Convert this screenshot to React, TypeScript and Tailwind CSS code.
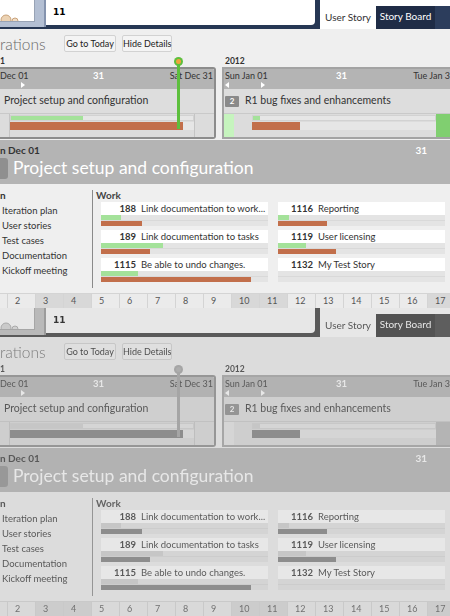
import React from "react";

interface WorkItem {
  id: string;
  title: string;
  done: number;
  spent: number;
}

const workColumns: WorkItem[][] = [
  [
    { id: "188", title: "Link documentation to work...", done: 20, spent: 41 },
    { id: "189", title: "Link documentation to tasks", done: 62, spent: 49 },
    { id: "1115", title: "Be able to undo changes.", done: 37, spent: 150 },
  ],
  [
    { id: "1116", title: "Reporting", done: 11, spent: 49 },
    { id: "1119", title: "User licensing", done: 28, spent: 58 },
    { id: "1132", title: "My Test Story", done: 0, spent: 0 },
  ],
];

const planItems = ["Iteration plan", "User stories", "Test cases", "Documentation", "Kickoff meeting"];

// day 1 is scrolled off to the left, only its last 8px show
const days = Array.from({ length: 16 }, (_, i) => i + 2);
const weekend = [3, 4, 10, 11, 17];

function Arrow({ dir }: { dir: "left" | "right" }) {
  return (
    <svg width="4" height="6" viewBox="0 0 4 6" className="block">
      {dir === "right" ? <path d="M0 0 L4 3 L0 6 Z" fill="#fff" /> : <path d="M4 0 L0 3 L4 6 Z" fill="#fff" />}
    </svg>
  );
}

function TopBar() {
  return (
    <div className="flex h-[29px] bg-[#263754]">
      <div className="h-[27px] w-[46px] border-r-2 border-[#8493ae] bg-[#b3bfd3]">
        <div className="h-[22px] w-[35px] overflow-hidden border-r border-b border-[#98a3b5] bg-white">
          <svg width="35" height="22" viewBox="0 0 35 22" className="block">
            <circle cx="6" cy="20" r="5" fill="#ecd3b4" stroke="#c9a27a" strokeWidth="1" />
            <circle cx="15" cy="21" r="3" fill="#f0dcc4" stroke="#c9a27a" strokeWidth="1" />
          </svg>
        </div>
      </div>
      <div className="flex h-[25px] w-[269px] items-center rounded-br-[4px] bg-white pl-[7px] font-['DejaVu_Sans',sans-serif] text-[9px] font-bold text-black">
        11
      </div>
      <div className="w-[5px]" />
      <div className="flex flex-1 flex-col">
        <div className="h-[6px] bg-white" />
        <div className="flex h-[23px]">
          <div className="flex w-[56px] items-center justify-center bg-white pb-[1px] text-[10px] text-[#333]">User Story</div>
          <div className="flex w-[59px] items-center justify-center bg-[#1f2c46] pb-[3px] text-[10px] text-white">Story Board</div>
          <div className="flex-1 bg-[#2c3d5c]" />
        </div>
      </div>
    </div>
  );
}

function Toolbar() {
  return (
    <div className="flex h-[27px] items-start pt-[6px]">
      <div className="w-[64px] pt-[1px] text-[15.5px] font-light leading-[16px] text-[#6a6a6a]">rations</div>
      <button className="h-[17px] w-[52px] whitespace-nowrap rounded-[2px] border border-[#d2d2d2] bg-[#f4f4f4] text-[9px] leading-[15px] text-[#222]">
        Go to Today
      </button>
      <button className="ml-[6px] h-[17px] w-[50px] whitespace-nowrap rounded-[2px] border border-[#d2d2d2] bg-[#f4f4f4] text-[9px] leading-[15px] text-[#222]">
        Hide Details
      </button>
    </div>
  );
}

function Timeline() {
  return (
    <>
      <div className="flex h-[11px] text-[8.5px] font-bold leading-[11px] text-[#333]">
        <div className="w-[225px]">1</div>
        <div>2012</div>
      </div>
      <div className="flex h-[72px] gap-[6px]">
        <div className="flex w-[216px] flex-col overflow-hidden rounded-r-[3px] border-2 border-l-0 border-[#8c8c8c]">
          <div className="h-[20px] bg-[#b4b4b4]">
            <div className="flex h-[12px] items-end text-[9px] leading-[11px] text-[#333]">
              <div className="w-[93px]">Dec 01</div>
              <div className="text-[9.5px] font-bold text-white">31</div>
              <div className="ml-auto pr-[1px]">Sat Dec 31</div>
            </div>
            <div className="flex pl-[21px] pt-[1px]">
              <Arrow dir="right" />
            </div>
          </div>
          <div className="flex h-[24px] items-center bg-[#dddddd] pl-[4px] text-[10.5px] text-[#333]">
            Project setup and configuration
          </div>
          <div className="flex h-[24px] border-t border-[#c9c9c9] bg-[#dcdcdc]">
            <div className="w-[10px] border-r border-[#c4c4c4]" />
            <div className="flex w-[184px] flex-col gap-[1px] pt-[1px]">
              <div className="h-[6px] border border-[#d2d2d2] bg-[#e6e6e6]">
                <div className="h-full w-[72px] bg-[#a4e29a]" />
              </div>
              <div className="h-[8px] bg-[#e6e6e6]">
                <div className="h-full w-[173px] bg-[#c26f4b]" />
              </div>
            </div>
            <div className="flex-1 border-l border-[#c4c4c4]" />
          </div>
        </div>
        <div className="flex flex-1 flex-col overflow-hidden border-2 border-r-0 border-[#a3a3a3]">
          <div className="h-[20px] bg-[#b4b4b4] pl-[1px]">
            <div className="flex h-[12px] items-end text-[9px] leading-[11px] text-[#333]">
              <div className="w-[111px]">Sun Jan 01</div>
              <div className="text-[9.5px] font-bold text-white">31</div>
              <div className="ml-auto">Tue Jan 3</div>
            </div>
            <div className="flex gap-[32px] pt-[1px]">
              <Arrow dir="left" />
              <Arrow dir="right" />
            </div>
          </div>
          <div className="flex h-[24px] items-center gap-[6px] bg-[#dddddd] pl-[1px] text-[10.5px] text-[#333]">
            <div className="flex h-[11px] w-[14px] items-center justify-center rounded-[1px] bg-[#8a8a8a] text-[8px] font-bold text-white">
              2
            </div>
            R1 bug fixes and enhancements
          </div>
          <div className="flex h-[24px] border-t border-[#c9c9c9] bg-[#dcdcdc]">
            <div className="w-[10px] bg-[#c6f4be]" />
            <div className="w-[18px]" />
            <div className="flex w-[184px] flex-col gap-[1px] pt-[1px]">
              <div className="h-[6px] border border-[#d2d2d2] bg-[#e6e6e6]">
                <div className="h-full w-[7px] bg-[#a4e29a]" />
              </div>
              <div className="h-[8px] bg-[#e6e6e6]">
                <div className="h-full w-[48px] bg-[#c26f4b]" />
              </div>
            </div>
            <div className="flex-1 bg-[#80cf70]" />
          </div>
        </div>
      </div>
    </>
  );
}

function Band() {
  return (
    <div className="mt-[1px] h-[44px] bg-[#b4b4b4]">
      <div className="flex h-[17px] items-start justify-between pt-[4px] pr-[23px] text-[10px] font-bold leading-[12px]">
        <div className="text-[#333]">n Dec 01</div>
        <div className="text-white">31</div>
      </div>
      <div className="flex h-[22px] items-center gap-[5px]">
        <div className="h-[21px] w-[8px] rounded-r-[3px] bg-[#8f8f8f]" />
        <div className="text-[17.5px] leading-[22px] text-white">Project setup and configuration</div>
      </div>
    </div>
  );
}

function WorkCard({ item }: { item: WorkItem }) {
  return (
    <div className="flex flex-col">
      <div className="flex h-[13px] items-center whitespace-nowrap bg-white text-[9.5px] leading-[13px] text-[#333]">
        <div className="w-[35px] text-right font-bold">{item.id}</div>
        <div className="pl-[5px]">{item.title}</div>
      </div>
      <div className="h-[6px] border-b border-[#d9d9d9] bg-[#e4e4e4]">
        <div className="h-full bg-[#a4e29a]" style={{ width: item.done }} />
      </div>
      <div className="h-[5px] bg-[#e4e4e4]">
        <div className="h-full bg-[#c26f4b]" style={{ width: item.spent }} />
      </div>
    </div>
  );
}

function Details() {
  return (
    <div className="flex h-[109px] pt-[5px]">
      <div className="w-[92px]">
        <div className="h-[12px] text-[10px] font-bold leading-[12px] text-[#333]">n</div>
        <div className="mt-[2px]">
          {planItems.map((p) => (
            <div key={p} className="h-[15px] pl-[2px] text-[9.5px] leading-[15px] text-[#333]">
              {p}
            </div>
          ))}
        </div>
      </div>
      <div className="mt-[1px] h-[98px] w-px bg-[#8a8a8a]" />
      <div className="pl-[3px]">
        <div className="h-[12px] text-[10px] font-bold leading-[12px] text-[#444]">Work</div>
        <div className="mt-[1px] grid grid-cols-[167px_167px] gap-x-[10px] pl-[5px]">
          {workColumns.map((col, i) => (
            <div key={i} className="flex flex-col gap-[4px]">
              {col.map((item) => (
                <WorkCard key={item.id} item={item} />
              ))}
            </div>
          ))}
        </div>
      </div>
    </div>
  );
}

function Ruler() {
  return (
    <div className="flex h-[15px] border-t border-[#d4d4d4]">
      <div className="h-full w-[8px] shrink-0 border-r border-[#d4d4d4] bg-[#ebebeb]" />
      {days.map((d) => (
        <div
          key={d}
          className={`h-full w-[28px] shrink-0 border-r border-[#d4d4d4] pl-[7px] text-[9px] leading-[14px] text-[#555] ${
            weekend.includes(d) ? "bg-[#d8d8d8]" : "bg-[#ebebeb]"
          }`}
        >
          {d}
        </div>
      ))}
    </div>
  );
}

function Frame() {
  return (
    <div className="relative h-[308px] w-[450px] overflow-hidden bg-[#efefef] font-['Lato',sans-serif] text-[#333]">
      <TopBar />
      <Toolbar />
      <Timeline />
      <Band />
      <Details />
      <Ruler />
      {/* today marker */}
      <div className="absolute left-[177px] top-[61px] h-[68px] w-[3px] bg-[#5dbf3d]" />
      <div className="absolute left-[174px] top-[57px] flex h-[9px] w-[9px] items-center justify-center rounded-full bg-[#5dbf3d]">
        <div className="h-[5px] w-[5px] rounded-full bg-[#f0a33c]" />
      </div>
    </div>
  );
}

export default function App() {
  return (
    <div className="w-[450px]">
      <Frame />
      <div className="relative">
        <div className="grayscale">
          <Frame />
        </div>
        <div className="absolute inset-0 bg-[#b0b0b0]/30" />
      </div>
    </div>
  );
}
